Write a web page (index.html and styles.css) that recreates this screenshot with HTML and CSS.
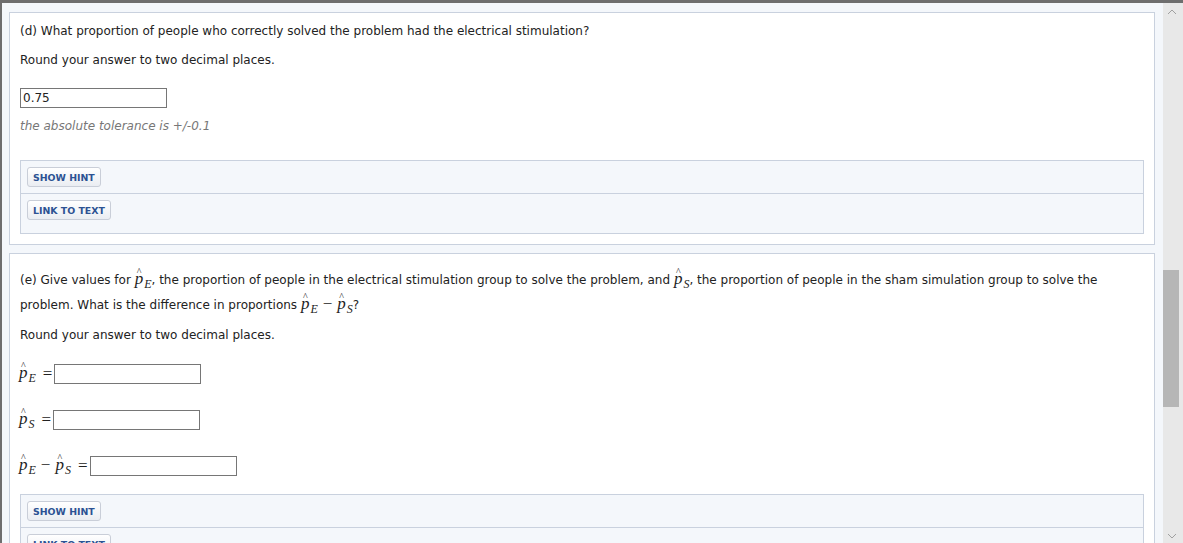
FILE: index.html
```html
<!DOCTYPE html>
<html lang="en">
<head>
    <meta charset="UTF-8">
    <title>Question (d) and (e)</title>
    <link rel="stylesheet" href="styles.css">
</head>
<body>

<div class="frame">
    <main class="page">

        <section class="card">
            <p class="q">(d) What proportion of people who correctly solved the problem had the electrical stimulation?</p>
            <p class="q">Round your answer to two decimal places.</p>
            <div class="answer"><input type="text" value="0.75"></div>
            <p class="tolerance">the absolute tolerance is +/-0.1</p>
            <div class="hint-box">
                <div class="hint-row"><button class="btn">SHOW HINT</button></div>
                <div class="hint-row last"><button class="btn">LINK TO TEXT</button></div>
            </div>
        </section>

        <section class="card">
            <p class="q tall">(e) Give values for <span class="m"><span class="p">p<span class="hat">^</span></span><span class="sub">E</span></span>, the proportion of people in the electrical stimulation group to solve the problem, and <span class="m"><span class="p">p<span class="hat">^</span></span><span class="sub">S</span></span>, the proportion of people in the sham simulation group to solve the problem. What is the difference in proportions <span class="m"><span class="p">p<span class="hat">^</span></span><span class="sub">E</span><span class="minus">−</span><span class="p">p<span class="hat">^</span></span><span class="sub">S</span></span>?</p>
            <p class="q">Round your answer to two decimal places.</p>

            <div class="eq">
                <span class="m"><span class="p">p<span class="hat">^</span></span><span class="sub">E</span></span>
                <span class="op">=</span>
                <input type="text">
            </div>
            <div class="eq">
                <span class="m"><span class="p">p<span class="hat">^</span></span><span class="sub">S</span></span>
                <span class="op">=</span>
                <input type="text">
            </div>
            <div class="eq">
                <span class="m"><span class="p">p<span class="hat">^</span></span><span class="sub">E</span><span class="minus">−</span><span class="p">p<span class="hat">^</span></span><span class="sub">S</span></span>
                <span class="op">=</span>
                <input type="text">
            </div>

            <div class="hint-box after-eq">
                <div class="hint-row"><button class="btn">SHOW HINT</button></div>
                <div class="hint-row last"><button class="btn">LINK TO TEXT</button></div>
            </div>
        </section>

    </main>

    <div class="scrollbar">
        <svg class="arrow" width="20" height="17" viewBox="0 0 20 17"><polyline points="5,11 9,7 13,11" fill="none" stroke="#a0a0a0" stroke-width="1"/></svg>
        <div class="thumb"></div>
        <div class="spacer"></div>
        <svg class="arrow" width="20" height="17" viewBox="0 0 20 17"><polyline points="5,8 9,12 13,8" fill="none" stroke="#a0a0a0" stroke-width="1"/></svg>
    </div>
</div>

</body>
</html>
```

FILE: styles.css
```css
        html, body {
            margin: 0;
            padding: 0;
            height: 543px;
            overflow: hidden;
        }
        body {
            font-family: "DejaVu Sans", Verdana, sans-serif;
            font-size: 12px;
            color: #222;
            background: #f4f7fb;
        }
        .frame {
            display: flex;
            height: 540px;
            border-top: 3px solid #6e6e6e;
        }
        .page {
            flex: 1;
            border-left: 2px solid #6e6e6e;
            padding: 9px 8px 0 7px;
            background: #f4f7fb;
            overflow: hidden;
        }
        .card {
            background: #fff;
            border: 1px solid #c9d1de;
            padding: 10px;
            margin-bottom: 8px;
        }
        .q {
            margin: 0 0 13px;
            line-height: 16px;
        }
        .q.tall {
            line-height: 25px;
            padding-top: 4px;
            margin-bottom: 9px;
        }
        .answer {
            margin: 20px 0 0;
            height: 20px;
        }
        input {
            display: block;
            box-sizing: border-box;
            width: 147px;
            height: 20px;
            margin: 0;
            padding: 0 2px;
            border: 1px solid #767676;
            font-family: "DejaVu Sans", Verdana, sans-serif;
            font-size: 12px;
            color: #222;
            background: #fff;
        }
        .tolerance {
            margin: 9px 0 0;
            line-height: 18px;
            font-style: italic;
            color: #777;
        }
        .hint-box {
            margin-top: 25px;
            border: 1px solid #c9d1de;
            background: #f4f7fb;
        }
        .hint-box.after-eq {
            margin-top: 13px;
        }
        .hint-row {
            padding: 6px;
            border-bottom: 1px solid #c9d1de;
        }
        .hint-row.last {
            border-bottom: none;
            padding-bottom: 13px;
        }
        .btn {
            display: block;
            height: 20px;
            padding: 0 5px;
            border: 1px solid #c9ced8;
            border-radius: 3px;
            background: linear-gradient(#ffffff, #eaedf2);
            font-family: "DejaVu Sans", Verdana, sans-serif;
            font-size: 9.4px;
            font-weight: bold;
            color: #2c5293;
            cursor: pointer;
        }

        /* math */
        .m {
            font-family: "Liberation Serif", "Times New Roman", serif;
            font-style: italic;
            font-size: 17px;
            line-height: 1;
            white-space: nowrap;
        }
        .p {
            position: relative;
            display: inline-block;
            line-height: 17px;
        }
        .hat {
            position: absolute;
            left: 2px;
            top: -3px;
            font-style: normal;
            font-size: 10px;
            line-height: 10px;
        }
        .sub {
            font-size: 12px;
            line-height: 1;
            vertical-align: -4px;
            margin-left: 1px;
        }
        .minus {
            font-style: normal;
            margin: 0 5px;
        }
        .eq {
            display: flex;
            align-items: center;
            height: 30px;
            margin-top: 16px;
        }
        .eq .m {
            margin-left: -1px;
        }
        .op {
            font-family: "Liberation Serif", "Times New Roman", serif;
            font-size: 17px;
            margin: 0 2px 0 7px;
        }

        .scrollbar {
            width: 20px;
            background: #e8e8e8;
            display: flex;
            flex-direction: column;
        }
        .arrow {
            display: block;
            flex: none;
        }
        .thumb {
            width: 16px;
            height: 137px;
            margin-top: 250px;
            background: #b6b6b6;
        }
        .spacer {
            flex: 1;
        }
```
